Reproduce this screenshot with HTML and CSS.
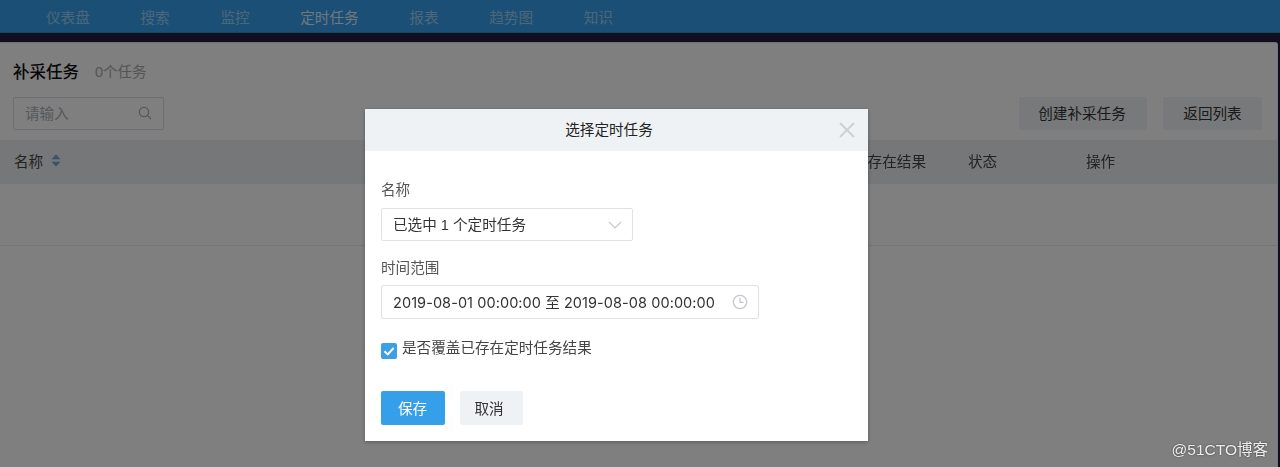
FILE: index.html
```html
<!DOCTYPE html>
<html lang="zh-CN">
<head>
<meta charset="utf-8">
<title>补采任务</title>
<link rel="stylesheet" href="styles.css">
</head>
<body>
<div class="app">
  <nav class="nav">
    <a class="nav-item">仪表盘</a>
    <a class="nav-item">搜索</a>
    <a class="nav-item">监控</a>
    <a class="nav-item active">定时任务</a>
    <a class="nav-item">报表</a>
    <a class="nav-item">趋势图</a>
    <a class="nav-item">知识</a>
  </nav>
  <main class="panel">
    <div class="heading">
      <h1 class="title">补采任务</h1>
      <span class="count">0个任务</span>
    </div>
    <div class="toolbar">
      <div class="search">
        <span class="search-text">请输入</span>
        <svg class="search-icon" width="14" height="14" viewBox="0 0 14 14"><circle cx="6" cy="6" r="4.6"/><path d="M9.4 9.4L13 13"/></svg>
      </div>
      <div class="actions">
        <button class="btn">创建补采任务</button>
        <button class="btn btn-back">返回列表</button>
      </div>
    </div>
    <div class="thead">
      <div class="th th-name">名称
        <svg class="sort" width="10" height="13" viewBox="0 0 10 13"><path d="M5 0.5L9.5 5.3H0.5Z"/><path d="M5 12.5L9.5 7.7H0.5Z"/></svg>
      </div>
      <div class="th th-result">是否覆盖已存在结果</div>
      <div class="th">状态</div>
      <div class="th th-ops">操作</div>
    </div>
    <div class="empty-row"></div>
  </main>
</div>
<div class="overlay"></div>
<section class="modal">
  <header class="modal-head">
    <span class="modal-title">选择定时任务</span>
    <svg class="close" width="16" height="16" viewBox="0 0 16 16"><path d="M1 1L15 15M15 1L1 15"/></svg>
  </header>
  <div class="modal-body">
    <label class="label">名称</label>
    <div class="field field-select">
      <span class="field-text">已选中 1 个定时任务</span>
      <svg class="chevron" width="14" height="8" viewBox="0 0 14 8"><path d="M1 1L7 7L13 1"/></svg>
    </div>
    <label class="label label-time">时间范围</label>
    <div class="field field-date">
      <span class="field-text date-text">2019-08-01 00:00:00 至 2019-08-08 00:00:00</span>
      <svg class="clock" width="16" height="16" viewBox="0 0 16 16"><circle cx="8" cy="8" r="6.7"/><path d="M8 3.8V8.3H11.6"/></svg>
    </div>
    <div class="check-row">
      <span class="checkbox"><svg width="16" height="16" viewBox="0 0 16 16"><path d="M3.4 8.2L6.8 11.4L12.6 5"/></svg></span>
      <span class="check-label">是否覆盖已存在定时任务结果</span>
    </div>
    <div class="modal-actions">
      <button class="mbtn mbtn-primary">保存</button>
      <button class="mbtn">取消</button>
    </div>
  </div>
</section>
<div class="watermark">@51CTO博客</div>
</body>
</html>
```

FILE: styles.css
```css
* { box-sizing: border-box; }
html, body { margin: 0; height: 467px; overflow: hidden; }
body {
  font-family: "Liberation Sans", "Noto Sans CJK SC", sans-serif;
  font-size: 14.6px;
  color: #333;
  background: #1f1e3c;
}
.app { height: 467px; display: flex; flex-direction: column; filter: blur(.4px); }
.nav {
  height: 33px;
  flex: none;
  display: flex;
  align-items: center;
  gap: 50.7px;
  padding-left: 46px;
  background: #369fea;
  border-bottom: 1px solid #2a8ec9;
  color: rgba(255, 255, 255, .5);
}
.nav-item.active { color: rgba(255, 255, 255, .85); }
.panel {
  margin: 9px 2px 0 0;
  flex: 1;
  background: #fff;
  border-top: 1px solid #dfe8e2;
  border-right: 1px solid #eee;
  border-radius: 0 3px 0 0;
}
.heading { display: flex; align-items: center; gap: 16px; padding-left: 13px; height: 54px; padding-top: 4px; }
.title { margin: 0; font-size: 16.5px; line-height: 24px; font-weight: 500; color: #111; }
.count { color: #aaa; font-size: 14.5px; margin-bottom: 4px; }
.toolbar { display: flex; justify-content: space-between; padding: 0 15px 0 13px; height: 43px; }
.search {
  width: 151px;
  height: 33px;
  display: flex;
  align-items: center;
  justify-content: space-between;
  padding: 0 11px 2px;
  border: 1px solid #d8dde2;
  border-radius: 2px;
  color: #aab0b5;
}
.search-icon { fill: none; stroke: #a8adb2; stroke-width: 1.3; }
.actions { display: flex; gap: 16px; }
.btn {
  width: 128px;
  height: 33px;
  border: 0;
  border-radius: 2px;
  background: #eff2f5;
  color: #333;
  font: inherit;
  padding: 0 2px 2px 0;
}
.btn-back { width: 99px; padding-right: 0; }
.thead {
  height: 44px;
  display: grid;
  grid-template-columns: 1fr 132px 117px 192px;
  align-items: center;
  padding-left: 14px;
  padding-bottom: 4px;
  background: #ebeff2;
  color: #444;
}
.th-name { display: flex; align-items: center; gap: 8px; }
.th-result { white-space: nowrap; justify-self: end; padding-right: 42px; }
.th-ops { padding-left: 1px; }
.sort { fill: #6ea6cc; }
.empty-row { height: 62px; border-bottom: 1px solid #e6e9ec; }
.overlay { position: absolute; inset: 0; background: rgba(0, 0, 0, .5); }
.modal {
  position: absolute;
  left: 365px;
  top: 109px;
  width: 503px;
  height: 332px;
  background: #fff;
  box-shadow: 0 1px 4px rgba(0, 0, 0, .3);
}
.modal-head {
  position: relative;
  height: 42px;
  display: flex;
  align-items: center;
  justify-content: center;
  padding: 0 15px 3px 0;
  background: #eff2f5;
  color: #222;
}
.close { position: absolute; right: 13px; top: 13px; fill: none; stroke: #cdd0d3; stroke-width: 1.9; }
.modal-body { padding: 28px 16px 0; display: flex; flex-direction: column; align-items: flex-start; }
.label { line-height: 22px; color: #555; height: 29px; }
.label-time { margin-top: 16px; height: 28px; }
.field {
  height: 33px;
  display: flex;
  align-items: center;
  justify-content: space-between;
  border: 1px solid #dfe3e7;
  border-radius: 2px;
  padding: 0 10px 0 11px;
  color: #333;
}
.field-text { margin-bottom: 2px; }
.date-text { font-family: Inter, "Noto Sans CJK SC", sans-serif; font-size: 14.5px; letter-spacing: .07px; white-space: nowrap; }
.field-select { width: 252px; }
.field-date { width: 378px; height: 34px; }
.chevron { fill: none; stroke: #c4c8cc; stroke-width: 1.2; }
.clock { fill: none; stroke: #c4c8cc; stroke-width: 1.2; }
.check-row { display: flex; gap: 5px; margin-top: 24px; height: 16px; }
.checkbox { width: 16px; height: 16px; border-radius: 2px; background: #3a9fe6; }
.checkbox svg { display: block; fill: none; stroke: #fff; stroke-width: 2; }
.check-label { line-height: 11px; color: #444; white-space: nowrap; }
.modal-actions { display: flex; gap: 15px; margin-top: 32px; }
.mbtn {
  width: 63px;
  height: 34px;
  border: 0;
  border-radius: 2px;
  background: #eff2f5;
  color: #333;
  font: inherit;
  padding: 0 5px 2px 0;
}
.mbtn-primary { width: 64px; background: #369fea; color: #fff; padding-right: 1px; }
.watermark {
  position: absolute;
  right: 12px;
  top: 437px;
  color: #eee;
  font-size: 15.5px;
  text-shadow: 0 0 2px #333;
}
```
